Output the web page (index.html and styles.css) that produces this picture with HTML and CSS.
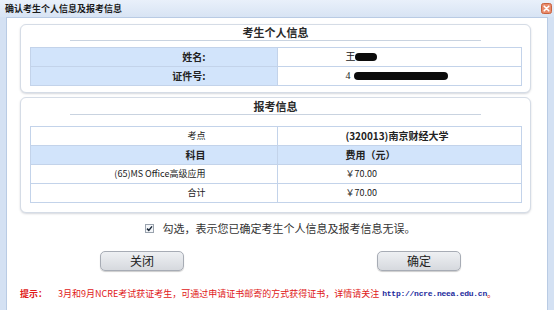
FILE: index.html
```html
<!DOCTYPE html>
<html lang="zh-CN">
<head>
<meta charset="utf-8">
<title>确认考生个人信息及报考信息</title>
<link rel="stylesheet" href="styles.css">
</head>
<body>
<div class="win">
  <div class="titlebar">
    <span class="title">确认考生个人信息及报考信息</span>
    <span class="close"><svg width="11" height="11" viewBox="0 0 11 11"><rect x="0.5" y="0.5" width="10" height="10" rx="2" fill="#e98a6b" stroke="#c8623f"/><path d="M3.2 3.2 L7.8 7.8 M7.8 3.2 L3.2 7.8" stroke="#fff" stroke-width="1.6" stroke-linecap="round"/></svg></span>
  </div>
  <div class="body">
    <section class="box box-person">
      <h2 class="box-title">考生个人信息</h2>
      <table class="tbl">
        <tr class="row-blue"><td class="lbl strong">姓名:</td><td class="val"><span class="val-text">王<span class="blot blot-short"></span></span></td></tr>
        <tr class="row-blue"><td class="lbl strong">证件号:</td><td class="val"><span class="val-text">4<span class="blot blot-long"></span></span></td></tr>
      </table>
    </section>
    <section class="box box-exam">
      <h2 class="box-title box-title-exam">报考信息</h2>
      <table class="tbl tbl-exam">
        <tr><td class="lbl">考点</td><td class="val strong">(320013)南京财经大学</td></tr>
        <tr class="row-head"><td class="lbl strong">科目</td><td class="val strong">费用（元）</td></tr>
        <tr><td class="lbl">(65)MS Office高级应用</td><td class="val">￥70.00</td></tr>
        <tr><td class="lbl">合计</td><td class="val">￥70.00</td></tr>
      </table>
    </section>
    <div class="confirm">
      <span class="chk"><svg width="9" height="9" viewBox="0 0 9 9"><rect x="0.5" y="0.5" width="8" height="8" fill="#f4f6f9" stroke="#9aa3ae"/><path d="M2 4.6 L3.8 6.4 L7 2.4" fill="none" stroke="#1d2a3a" stroke-width="1.5"/></svg></span>
      <span class="confirm-text">勾选，表示您已确定考生个人信息及报考信息无误。</span>
    </div>
    <div class="actions">
      <button class="btn" type="button">关闭</button>
      <button class="btn" type="button">确定</button>
    </div>
    <div class="hint">
      <span class="hint-label">提示：</span>
      <span class="hint-text">3月和9月NCRE考试获证考生，可通过申请证书邮寄的方式获得证书，详情请关注</span>
      <span class="hint-url">http://ncre.neea.edu.cn</span><span class="hint-text">。</span>
    </div>
  </div>
</div>
</body>
</html>
```

FILE: styles.css
```css
html, body {
  margin: 0;
  padding: 0;
}
body {
  width: 554px;
  height: 310px;
  overflow: hidden;
  font-family: "Noto Sans CJK SC", "Liberation Sans", sans-serif;
  color: #222;
}
.win {
  height: 310px;
  display: flex;
  flex-direction: column;
  background: #d4e1f3;
}
.titlebar {
  height: 17px;
  flex: 0 0 17px;
  display: flex;
  align-items: center;
  justify-content: space-between;
  padding: 0 2px 0 5px;
  background: linear-gradient(#e9f0fa, #d8e4f4);
}
.title {
  font-size: 9px;
  font-weight: bold;
  line-height: 17px;
  color: #1b1b1b;
}
.close {
  display: flex;
  width: 11px;
  height: 11px;
}
.body {
  flex: 1;
  margin: 0 6px;
  background: #fff;
  border: 1px solid #b9cbe4;
  border-bottom: 0;
  padding: 6px 16px 0 13px;
  display: flex;
  flex-direction: column;
}
.box {
  border: 1px solid #d5dce6;
  border-radius: 6px;
  box-shadow: 0 1px 2px rgba(90, 100, 120, 0.25);
  padding: 0 8px 6px 9px;
  background: #fff;
}
.box-exam {
  margin-top: 4px;
  padding-bottom: 9px;
}
.box-title {
  margin: 0 41px 6px 40px;
  height: 15px;
  line-height: 15px;
  font-size: 11px;
  font-weight: bold;
  text-align: center;
  color: #2a2a2a;
  border-bottom: 1px solid #c9d3e0;
}
.box-title-exam {
  height: 16px;
  line-height: 16px;
  margin-bottom: 11px;
}
.tbl {
  width: 100%;
  border-collapse: collapse;
  table-layout: fixed;
  border: 1px solid #c3d3ea;
}
.tbl td {
  width: 50%;
  height: 18px;
  padding: 0;
  border: 1px solid #c3d3ea;
  font-size: 9px;
  line-height: 12px;
  white-space: nowrap;
}
.tbl .lbl {
  text-align: right;
  padding-right: 72px;
}
.tbl .val {
  text-align: left;
  padding-left: 67px;
}
.strong {
  font-weight: bold;
  font-size: 10px !important;
}
.row-blue .lbl {
  background: #d2e4fb;
}
.row-head td {
  background: #d2e4fb;
}
.val-text {
  font-family: "Liberation Serif", "Noto Sans CJK SC", serif;
  font-size: 10px;
  display: inline-flex;
  align-items: center;
}
.blot {
  display: inline-block;
  background: #0b0b0b;
  border-radius: 5px;
}
.blot-short {
  width: 22px;
  height: 8px;
  margin-left: 0;
}
.blot-long {
  width: 94px;
  height: 8px;
  margin-left: 4px;
}
.confirm {
  margin-top: 7px;
  height: 16px;
  display: flex;
  align-items: center;
  justify-content: center;
  padding-left: 9px;
  gap: 9px;
}
.chk {
  display: flex;
  width: 9px;
  height: 9px;
}
.confirm-text {
  font-size: 11px;
  line-height: 16px;
  color: #333;
}
.actions {
  margin-top: 15px;
  display: flex;
  justify-content: center;
  gap: 193px;
  padding-left: 10px;
}
.btn {
  width: 84px;
  height: 20px;
  margin: 0;
  padding: 0;
  border: 1px solid #a7acb5;
  border-radius: 5px;
  background: linear-gradient(#eef0f3, #d6d9de);
  box-shadow: 0 1px 1px rgba(0, 0, 0, 0.2);
  font-family: "Noto Sans CJK SC", sans-serif;
  font-size: 12px;
  line-height: 18px;
  color: #222;
}
.hint {
  margin-top: 17px;
  height: 12px;
  display: flex;
  align-items: center;
  white-space: nowrap;
  line-height: 12px;
}
.hint-label {
  width: 38px;
  font-size: 9px;
  font-weight: bold;
  color: #e01818;
}
.hint-text {
  font-size: 9px;
  color: #e01818;
}
.hint-url {
  margin-left: 3px;
  font-family: "Liberation Mono", monospace;
  font-size: 8px;
  font-weight: bold;
  letter-spacing: -0.25px;
  color: #1c2a9c;
}
```
